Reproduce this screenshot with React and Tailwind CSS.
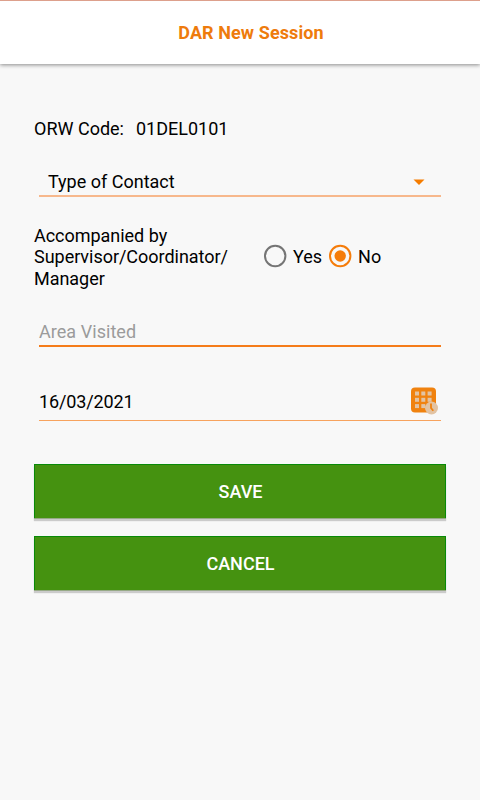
export default function App() {
  return (
    <div className="min-h-[800px] bg-[#f8f8f8] font-['Roboto',sans-serif] text-[18px] text-black">
      <header className="flex h-[64px] items-center justify-center border-t border-[#dda08c] bg-white pl-[22px] shadow-[0_1px_4px_rgba(0,0,0,0.45)]">
        <h1 className="text-[18px] font-bold tracking-[0.09px] text-[#ee7b0c]">DAR New Session</h1>
      </header>

      <main className="px-[34px] pt-[54px]">
        <div className="flex h-[21px] items-center gap-3 leading-[21px]">
          <span>ORW Code:</span>
          <span>01DEL0101</span>
        </div>

        {/* Contact type */}
        <div className="mx-[5px] mt-[29px] flex h-[29px] items-center justify-between border-b-2 border-[#f7b88c] pr-4 pl-[9px]">
          <span>Type of Contact</span>
          <svg className="h-[6px] w-3" viewBox="0 0 12 6" fill="#f57c00">
            <path d="M.5 .5h11L6 6z" />
          </svg>
        </div>

        {/* Accompanied by */}
        <div className="mt-[28px] flex h-16 items-center">
          <p className="w-[229px] leading-[21.3px] tracking-[-0.03px]">
            Accompanied by Supervisor/Coordinator/ Manager
          </p>
          <div className="mb-[2px] flex items-center">
            <Radio />
            <span className="ml-[6px]">Yes</span>
            <span className="ml-[6px] flex"><Radio checked /></span>
            <span className="ml-[6px]">No</span>
          </div>
        </div>

        <div className="mx-[5px] mt-[28px] flex h-[30px] items-center border-b-2 border-[#f57c1a] tracking-[0.05px] text-[#9b9b9b]">
          Area Visited
        </div>

        <div className="mx-[5px] mt-[36px] flex h-[38px] items-center justify-between border-b border-[#f7a35e] pr-[3px]">
          <span className="pb-px tracking-[-0.12px]">16/03/2021</span>
          <span className="pb-[2px]"><CalendarIcon /></span>
        </div>

        <div className="mt-[43px] flex flex-col gap-[18px]">
          <Button label="SAVE" />
          <Button label="CANCEL" />
        </div>
      </main>
    </div>
  )
}

function Button({ label }) {
  return (
    <button className="h-[54px] w-full border border-b-0 border-[#088a08] bg-[#459210] pl-px font-medium text-white shadow-[0_1px_0_#97aa87,0_3px_1px_#cbcbcb]">
      {label}
    </button>
  )
}

function Radio({ checked }) {
  return (
    <svg className="h-6 w-6" viewBox="0 0 24 24">
      <circle cx="12.200" cy="12" r="10.200" fill="none" stroke={checked ? '#f57c0a' : '#757575'} strokeWidth="2" />
      {checked && <circle cx="12.200" cy="12" r="5.700" fill="#f57c0a" />}
    </svg>
  )
}

function CalendarIcon() {
  return (
    <svg className="h-7 w-7" viewBox="0 0 28 28">
      <rect x="1" y="0.500" width="25" height="25" rx="4" fill="#f0820f" />
      {[4.5, 10.8, 17.1].map(y => [5, 11.3, 17.6].map(x => (
        <rect key={`${x}-${y}`} x={x} y={y} width="4" height="4" fill="#e2c3a3" />
      )))}
      <circle cx="21.500" cy="21" r="6.500" fill="#e2c3a3" />
      <path d="M21 16.500v4.500l2.300 2.800" fill="none" stroke="#f0820f" strokeWidth="1.800" />
    </svg>
  )
}
